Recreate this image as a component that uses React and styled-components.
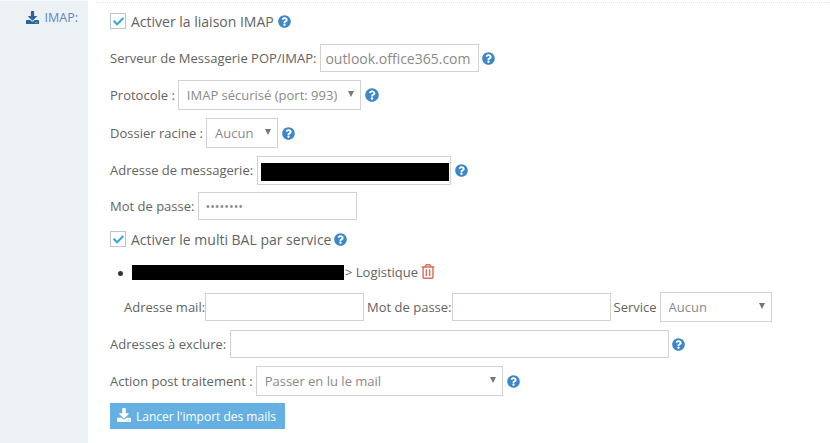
import React from "react";
import styled, { createGlobalStyle } from "styled-components";
import { FaCheck, FaDownload, FaQuestionCircle, FaRegTrashAlt } from "react-icons/fa";

const GlobalStyle = createGlobalStyle`
  html, body {
    margin: 0;
    padding: 0;
    background: #fff;
    font-family: "Open Sans", "Liberation Sans", sans-serif;
    color: #636363;
    overflow: hidden;
  }
`;

const Page = styled.div`
  display: flex;
  width: 830px;
  height: 443px;
`;

const Sidebar = styled.aside`
  flex: none;
  width: 88px;
  box-sizing: border-box;
  background: #ecf1f6;
  border-top: 1px solid #f7f9fb;
  display: flex;
  justify-content: flex-end;
  align-items: flex-start;
  gap: 6px;
  padding: 9px 10px 0 0;
  font-size: 12.5px;
  line-height: 16px;
  color: #5a8ab8;

  svg {
    margin-top: 1px;
    width: 13px;
    height: 13px;
    color: #2f6497;
  }
`;

const Main = styled.main`
  flex: 1;
  min-width: 0;
`;

const Form = styled.div`
  margin-left: 8px;
  padding: 3px 0 0 14px;
  border-top: 1px dotted #e6e6e6;
  margin-top: 2px;
  height: 437px;
  box-sizing: border-box;
`;

const Row = styled.div`
  display: flex;
  align-items: center;
  height: 30px;
  margin-top: ${(p) => p.$top ?? 7}px;
  padding-left: ${(p) => p.$indent ?? 0}px;
  font-size: 13px;
  white-space: nowrap;
`;

const Label = styled.label`
  margin-left: ${(p) => p.$left ?? 0}px;
  margin-right: ${(p) => p.$gap ?? 3}px;
`;

const CheckBox = styled.span`
  flex: none;
  box-sizing: border-box;
  width: 16px;
  height: 16px;
  margin-right: 5px;
  border: 1px solid #b9c6d2;
  background: #fff;
  display: flex;
  align-items: center;
  justify-content: center;
  color: #3fa9d5;

  svg {
    width: 11px;
    height: 11px;
  }
`;

const CheckText = styled.span`
  font-size: 14px;
`;

const TextField = styled.input`
  box-sizing: border-box;
  width: ${(p) => p.$w}px;
  height: 28px;
  border: 1px solid #d2d2d2;
  border-radius: 0;
  outline: none;
  padding: 0 4px;
  background: #fff;
  font-family: inherit;
  font-size: 14px;
  color: #8a8a8a;

  &[type="password"] {
    font-size: 12.5px;
    padding: 0 6px;
  }
`;

const MaskedBox = styled.div`
  box-sizing: border-box;
  width: ${(p) => p.$w}px;
  height: 29px;
  border: 1px solid #d2d2d2;
  padding: 6px 1px 3px 3px;
`;

const Redacted = styled.span`
  display: block;
  flex: none;
  width: ${(p) => p.$w}px;
  height: ${(p) => p.$h}px;
  background: #000;
`;

const SelectWrap = styled.div`
  position: relative;
  flex: none;
  width: ${(p) => p.$w}px;
  height: 30px;

  &::after {
    content: "";
    position: absolute;
    right: 7px;
    top: 11px;
    border-left: 3px solid transparent;
    border-right: 3px solid transparent;
    border-top: 6px solid #777;
    pointer-events: none;
  }
`;

const Select = styled.select`
  appearance: none;
  box-sizing: border-box;
  width: 100%;
  height: 100%;
  border: 1px solid #d2d2d2;
  border-radius: 0;
  outline: none;
  background: #fff;
  padding: 0 8px;
  font-family: inherit;
  font-size: 13px;
  color: #8a8a8a;
`;

const Help = styled(FaQuestionCircle)`
  flex: none;
  width: ${(p) => p.$size ?? 13}px;
  height: ${(p) => p.$size ?? 13}px;
  margin-left: ${(p) => p.$left ?? 4}px;
  color: #3c87c8;
`;

const Bullet = styled.span`
  flex: none;
  width: 5px;
  height: 5px;
  margin: 2px 9px 0 8px;
  border-radius: 50%;
  background: #333;
`;

const ServiceName = styled.span`
  margin-left: 1px;
`;

const Trash = styled(FaRegTrashAlt)`
  width: 14px;
  height: 15px;
  margin-left: 3px;
  margin-top: -2px;
  color: #dd6b5f;
`;

const ImportButton = styled.button`
  display: flex;
  align-items: center;
  gap: 5px;
  box-sizing: border-box;
  width: 175px;
  height: 26px;
  margin-top: 7px;
  padding: 0 0 0 7px;
  border: none;
  border-radius: 0;
  background: #65b0e2;
  color: #fff;
  font-family: inherit;
  font-size: 12px;
  white-space: nowrap;

  svg {
    width: 14px;
    height: 14px;
    margin-top: -3px;
  }
`;

const App = () => (
  <Page>
    <GlobalStyle />
    <Sidebar>
      <FaDownload />
      <span>IMAP:</span>
    </Sidebar>
    <Main>
      <Form>
        <Row $top={0}>
          <CheckBox><FaCheck /></CheckBox>
          <CheckText>Activer la liaison IMAP</CheckText>
          <Help />
        </Row>
        <Row>
          <Label $gap={4}>Serveur de Messagerie POP/IMAP:</Label>
          <TextField $w={159} defaultValue="outlook.office365.com" />
          <Help $left={3} />
        </Row>
        <Row>
          <Label>Protocole :</Label>
          <SelectWrap $w={183}>
            <Select defaultValue="imaps">
              <option value="imaps">IMAP sécurisé (port: 993)</option>
            </Select>
          </SelectWrap>
          <Help $size={14} />
        </Row>
        <Row $top={8}>
          <Label>Dossier racine :</Label>
          <SelectWrap $w={72}>
            <Select defaultValue="none">
              <option value="none">Aucun</option>
            </Select>
          </SelectWrap>
          <Help />
        </Row>
        <Row>
          <Label $gap={4}>Adresse de messagerie:</Label>
          <MaskedBox $w={194}>
            <Redacted $w={188} $h={18} />
          </MaskedBox>
          <Help />
        </Row>
        <Row $top={6}>
          <Label $gap={4}>Mot de passe:</Label>
          <TextField $w={159} type="password" defaultValue="password" />
        </Row>
        <Row $top={3}>
          <CheckBox><FaCheck /></CheckBox>
          <CheckText>Activer le multi BAL par service</CheckText>
          <Help $left={3} />
        </Row>
        <Row $top={3}>
          <Bullet />
          <Redacted $w={212} $h={15} />
          <ServiceName>&gt; Logistique</ServiceName>
          <Trash />
        </Row>
        <Row $top={5} $indent={14}>
          <Label $gap={0}>Adresse mail:</Label>
          <TextField $w={159} />
          <Label $gap={0} $left={3}>Mot de passe:</Label>
          <TextField $w={159} />
          <Label $left={3}>Service</Label>
          <SelectWrap $w={112}>
            <Select defaultValue="none">
              <option value="none">Aucun</option>
            </Select>
          </SelectWrap>
        </Row>
        <Row>
          <Label $gap={4}>Adresses à exclure:</Label>
          <TextField $w={439} />
          <Help $left={3} />
        </Row>
        <Row>
          <Label>Action post traitement :</Label>
          <SelectWrap $w={247}>
            <Select defaultValue="read">
              <option value="read">Passer en lu le mail</option>
            </Select>
          </SelectWrap>
          <Help />
        </Row>
        <ImportButton>
          <FaDownload />
          Lancer l'import des mails
        </ImportButton>
      </Form>
    </Main>
  </Page>
);

export default App;
